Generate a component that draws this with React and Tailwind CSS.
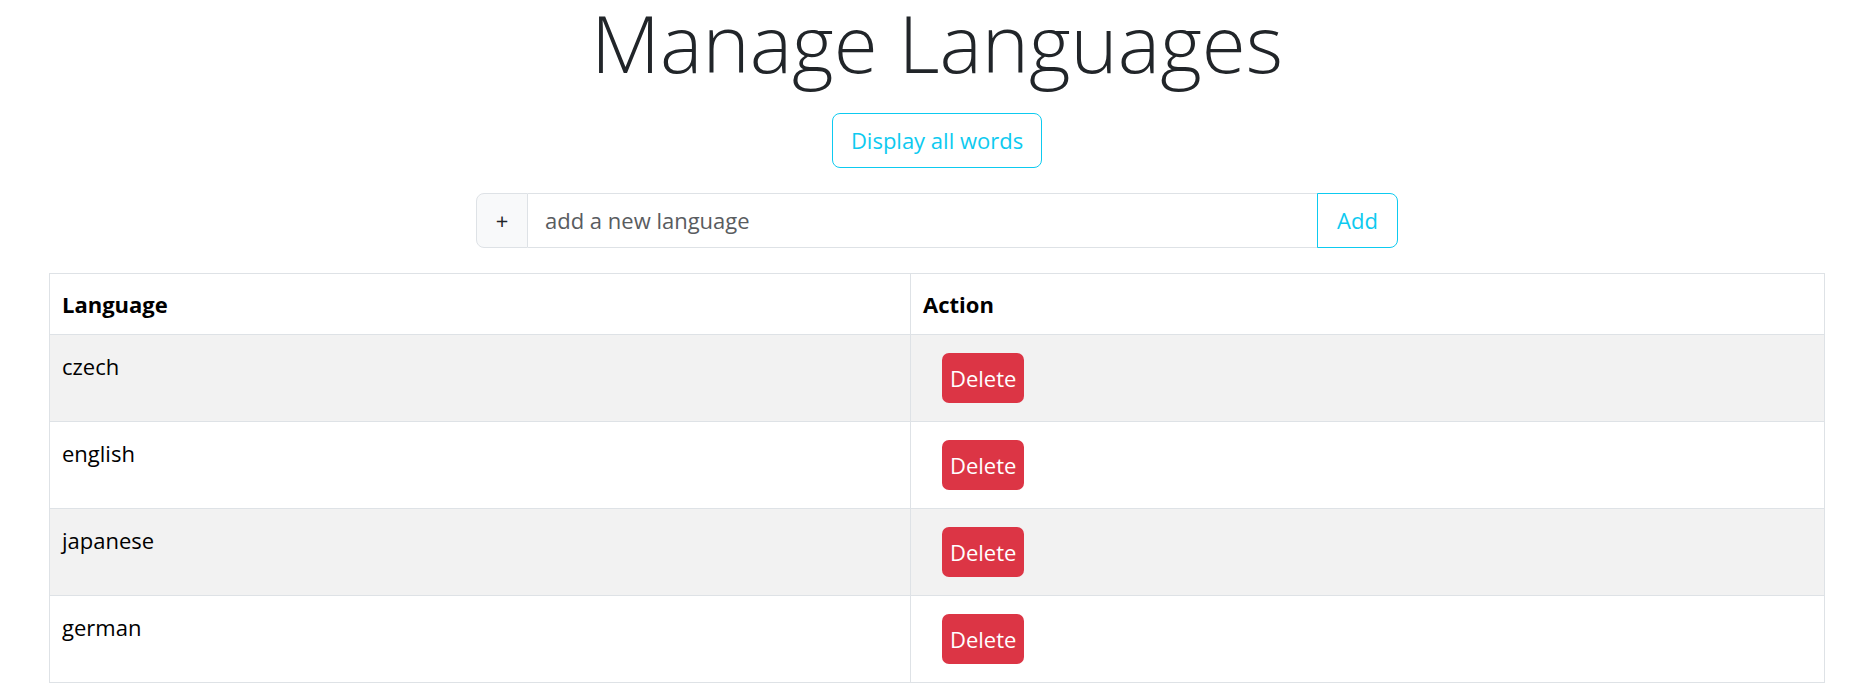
import React, { useState } from "react";

const initialLanguages = ["czech", "english", "japanese", "german"];

function App() {
  const [languages, setLanguages] = useState(initialLanguages);
  const [newLanguage, setNewLanguage] = useState("");

  // Add language
  const handleAdd = () => {
    const value = newLanguage.trim();
    if (!value) return;
    setLanguages(prev => [...prev, value]);
    setNewLanguage("");
  };

  // Delete language
  const handleDelete = (name) => {
    setLanguages(prev => prev.filter(l => l !== name));
  };

  return (
    <div className="min-h-screen bg-white pl-[49px] pr-[26px] font-['Open_Sans',sans-serif] text-[#212529]">
      <h1 className="text-center text-[80px] leading-[84px] font-light">Manage Languages</h1>

      <div className="flex justify-center mt-[29px]">
        <button className="h-[55px] px-[18px] rounded-[8px] border border-[#0dcaf0] text-[#0dcaf0] text-[22px]">
          Display all words
        </button>
      </div>

      <div className="flex justify-center mt-[25px]">
        <div className="flex w-[922px] h-[55px] text-[22px]">
          <span className="flex items-center justify-center w-[52px] bg-[#f8f9fa] border border-[#dee2e6] rounded-l-[8px] text-[#212529]">
            +
          </span>
          <input
            type="text"
            value={newLanguage}
            onChange={e => setNewLanguage(e.target.value)}
            placeholder="add a new language"
            className="flex-1 min-w-0 px-[17px] border border-l-0 border-[#dee2e6] outline-none placeholder:text-[#595c5f]"
          />
          <button
            onClick={handleAdd}
            className="w-[81px] rounded-r-[8px] border border-[#0dcaf0] text-[#0dcaf0] -ml-px"
          >
            Add
          </button>
        </div>
      </div>

      <table className="w-full mt-[25px] border-collapse border border-[#dee2e6] text-[22px] text-black table-fixed">
        <colgroup>
          <col className="w-[861px]" />
          <col />
        </colgroup>
        <thead>
          <tr className="h-[61px]">
            <th className="text-left font-bold px-[12px] border border-[#dee2e6]">Language</th>
            <th className="text-left font-bold px-[12px] border border-[#dee2e6]">Action</th>
          </tr>
        </thead>
        <tbody>
          {languages.map((lang, idx) => (
            <tr key={lang} className={`h-[87px] ${idx % 2 === 0 ? "bg-[#f2f2f2]" : "bg-white"}`}>
              <td className="align-top px-[12px] pt-[15px] border border-[#dee2e6]">{lang}</td>
              <td className="px-[12px] border border-[#dee2e6]">
                <button
                  onClick={() => handleDelete(lang)}
                  className="ml-[19px] h-[50px] px-[8px] rounded-[7px] bg-[#dc3545] text-white text-[22px]"
                >
                  Delete
                </button>
              </td>
            </tr>
          ))}
        </tbody>
      </table>
    </div>
  );
}

export default App;
